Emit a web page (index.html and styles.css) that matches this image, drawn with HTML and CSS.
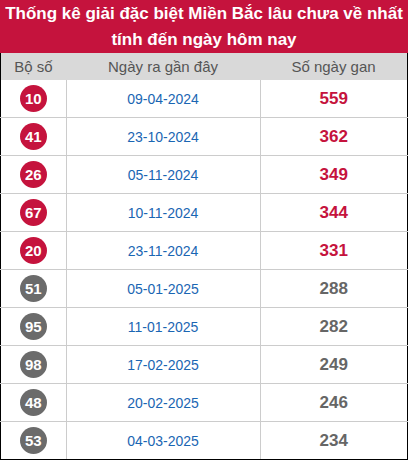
FILE: index.html
```html
<!DOCTYPE html>
<html lang="vi">
<head>
<meta charset="utf-8">
<link rel="stylesheet" href="styles.css">
</head>
<body>
<div class="box">
  <div class="title">Thống kê giải đặc biệt Miền Bắc lâu chưa về nhất<br>tính đến ngày hôm nay</div>
  <table class="tbl">
    <thead>
      <tr><th class="c1">Bộ số</th><th class="c2">Ngày ra gần đây</th><th class="c3">Số ngày gan</th></tr>
    </thead>
    <tbody>
      <tr><td><span class="ball red">10</span></td><td class="date">09-04-2024</td><td class="num red-t">559</td></tr>
      <tr><td><span class="ball red">41</span></td><td class="date">23-10-2024</td><td class="num red-t">362</td></tr>
      <tr><td><span class="ball red">26</span></td><td class="date">05-11-2024</td><td class="num red-t">349</td></tr>
      <tr><td><span class="ball red">67</span></td><td class="date">10-11-2024</td><td class="num red-t">344</td></tr>
      <tr><td><span class="ball red">20</span></td><td class="date">23-11-2024</td><td class="num red-t">331</td></tr>
      <tr><td><span class="ball gray">51</span></td><td class="date">05-01-2025</td><td class="num gray-t">288</td></tr>
      <tr><td><span class="ball gray">95</span></td><td class="date">11-01-2025</td><td class="num gray-t">282</td></tr>
      <tr><td><span class="ball gray">98</span></td><td class="date">17-02-2025</td><td class="num gray-t">249</td></tr>
      <tr><td><span class="ball gray">48</span></td><td class="date">20-02-2025</td><td class="num gray-t">246</td></tr>
      <tr><td><span class="ball gray">53</span></td><td class="date">04-03-2025</td><td class="num gray-t">234</td></tr>
    </tbody>
  </table>
</div>
</body>
</html>
```
FILE: styles.css
```css
html, body { margin: 0; padding: 0; background: #fff; }
body { font-family: "Liberation Sans", Arial, sans-serif; }
.box { width: 408px; }
.title {
  background: #c5133d;
  color: #fff;
  font-weight: bold;
  font-size: 17px;
  line-height: 26px;
  text-align: center;
  height: 53px;
  box-sizing: border-box;
  padding-top: 1px;
}
.tbl {
  width: 408px;
  border-collapse: collapse;
  table-layout: fixed;
  border-left: 1px solid #000;
  border-right: 1px solid #000;
  border-bottom: 1px solid #000;
}
.tbl th {
  background: #d9d9d9;
  color: #555;
  font-weight: normal;
  font-size: 15px;
  height: 27px;
  padding: 0;
  text-align: center;
}
.c1 { width: 65px; }
.c2 { width: 194px; }
.tbl td {
  height: 37px;
  padding: 0;
  text-align: center;
  border: 1px solid #ccc;
  vertical-align: middle;
}
.tbl tbody tr:first-child td { border-top: none; }
.tbl td:first-child { border-left: 1px solid #000; }
.tbl td:last-child { border-right: 1px solid #000; }
.tbl tbody tr:last-child td { border-bottom: 1px solid #000; }
.ball {
  display: inline-flex;
  align-items: center;
  justify-content: center;
  width: 27px;
  height: 27px;
  border-radius: 50%;
  color: #fff;
  font-weight: bold;
  font-size: 15px;
  vertical-align: middle;
}
.ball.red { background: #c5133d; }
.ball.gray { background: #6b6b6b; }
.date { color: #1a66b3; font-size: 14px; }
.num { font-weight: bold; font-size: 17px; }
.red-t { color: #c5133d; }
.gray-t { color: #666; }
```
